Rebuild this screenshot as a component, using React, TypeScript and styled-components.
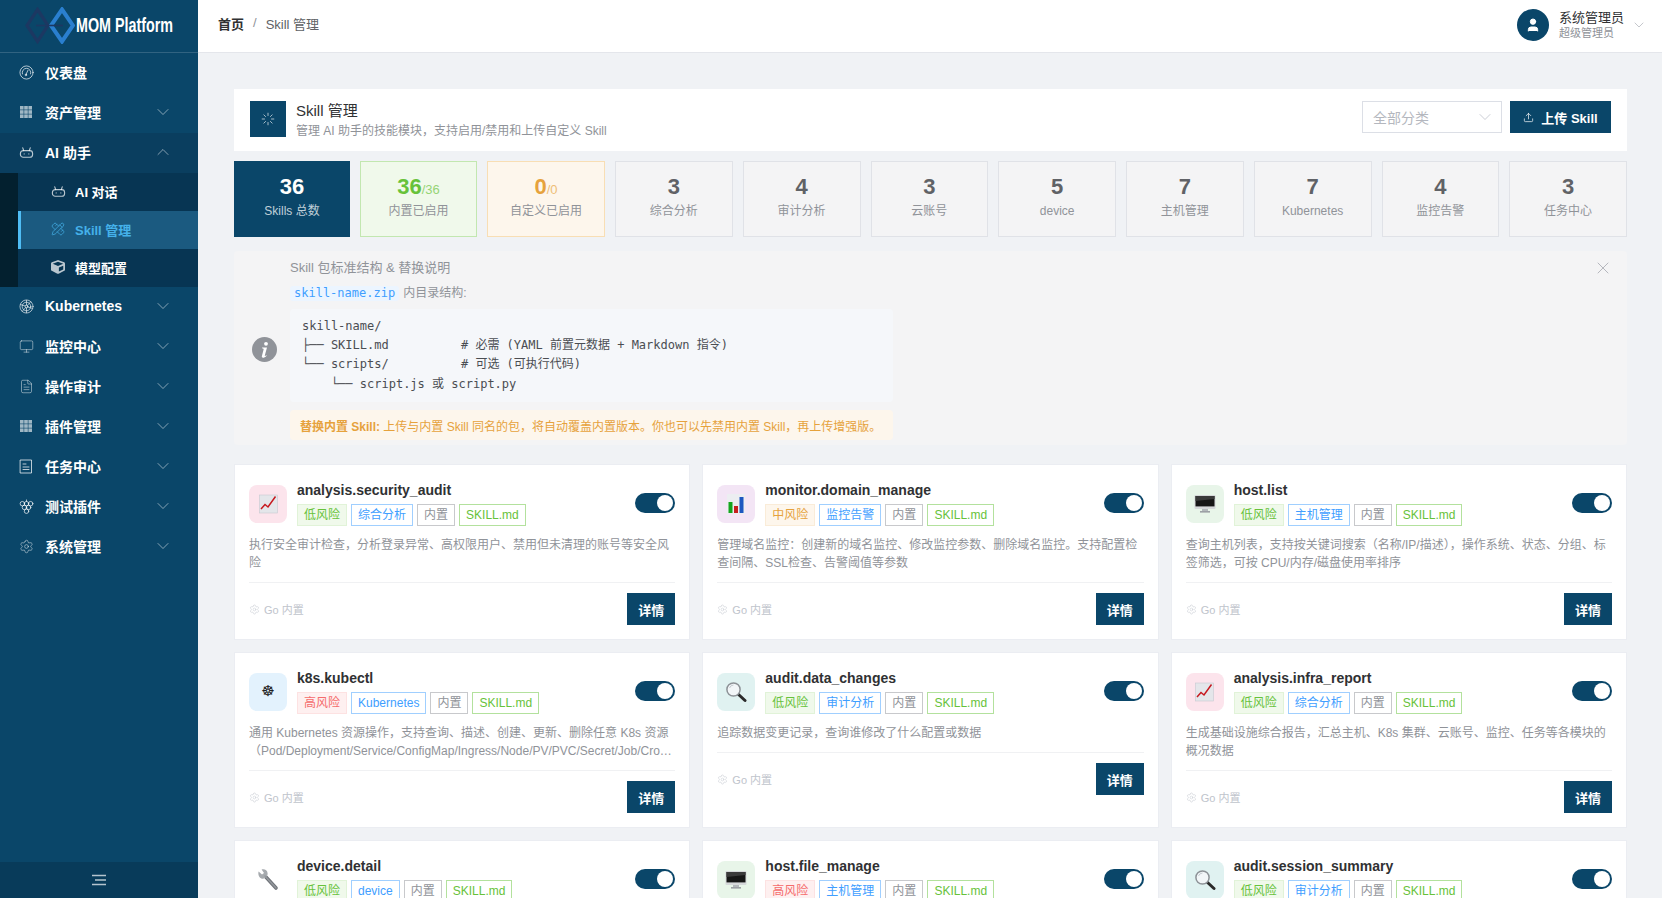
import React from "react";
import styled, { createGlobalStyle } from "styled-components";
import { ChevronDown, ChevronUp, Monitor, FileText, Settings, PencilRuler, X, Upload, Loader, User } from "lucide-react";
import { FaCube } from "react-icons/fa";

const NAVY = "#0a4669";
const SANS = `"Liberation Sans", "Noto Sans CJK SC", sans-serif`;
const MONO = `"DejaVu Sans Mono", "Noto Sans CJK SC", monospace`;
const COMMA = "\uFF0C";
const COLON = "\uFF1A";
const LP = "\uFF08";
const RP = "\uFF09";

const Global = createGlobalStyle`
  html, body { margin: 0; padding: 0; height: 100%; overflow: hidden; }
  body { font-family: ${SANS}; background: #f0f2f5; color: #303133; }
  * { box-sizing: border-box; }
`;

const Shell = styled.div`display: flex; height: 100vh; overflow: hidden;`;
const Sidebar = styled.aside`width: 198px; flex: none; background: ${NAVY}; display: flex; flex-direction: column; color: #fff;`;
const LogoBar = styled.div`height: 53px; flex: none; border-bottom: 1px solid rgba(255,255,255,.16); display: flex; align-items: center; padding: 0 0 2px 25px;`;
const LogoSvg = styled.svg`flex: none;`;
const LogoText = styled.span`display: inline-block; width: 97px; flex: none; margin-left: 1px; font-size: 20px; font-weight: 700; color: #fff; white-space: nowrap; transform: scaleX(.715); transform-origin: left center;`;
const NavItem = styled.div<{ $open?: boolean }>`height: 40px; display: flex; align-items: center; padding: 0 0 2px 18px; font-size: 14px; font-weight: 700; background: ${p => (p.$open ? "#0a3e5f" : "transparent")}; color: #fff;`;
const NavIcon = styled.span`width: 16px; height: 16px; margin-right: 11px; display: flex; align-items: center; justify-content: center; color: rgba(255,255,255,.72); flex: none;`;
const NavLabel = styled.span`flex: 1;`;
const NavArrow = styled.span`width: 20px; margin-right: 25px; display: flex; color: rgba(255,255,255,.55);`;
const SubNav = styled.div`border-left: 18px solid #03202f; background: #073553;`;
const SubItem = styled.div<{ $active?: boolean }>`height: 38px; display: flex; align-items: center; font-size: 13px; font-weight: 700; padding-bottom: 2px; padding-left: ${p => (p.$active ? "29px" : "32px")}; border-left: ${p => (p.$active ? "3px solid #4fbdf5" : "0")}; background: ${p => (p.$active ? "#1b5a80" : "transparent")}; color: ${p => (p.$active ? "#45b1ea" : "#fff")};`;
const SubIcon = styled.span<{ $active?: boolean }>`width: 16px; height: 16px; margin-right: 9px; display: flex; align-items: center; justify-content: center; color: ${p => (p.$active ? "#45b1ea" : "rgba(255,255,255,.72)")};`;
const Collapse = styled.div`margin-top: auto; height: 36px; flex: none; background: #083b5a; display: flex; align-items: center; justify-content: center; color: rgba(255,255,255,.7);`;

const Right = styled.div`flex: 1; min-width: 0; display: flex; flex-direction: column;`;
const TopBar = styled.header`height: 53px; flex: none; background: #fff; border-bottom: 1px solid #e4e6eb; display: flex; align-items: center; padding: 0 15px 2px 20px;`;
const Crumbs = styled.div`flex: 1; font-size: 13px; color: #606266; display: flex; gap: 9px; padding-bottom: 3px;`;
const CrumbHome = styled.span`font-weight: 700; color: #303133;`;
const CrumbSep = styled.span`color: #909399; padding-top: 1px;`;
const Avatar = styled.div`width: 32px; height: 32px; border-radius: 50%; background: ${NAVY}; color: #fff; display: flex; align-items: center; justify-content: center; margin-right: 10px;`;
const UserBox = styled.div`display: flex; flex-direction: column; margin-right: 7px;`;
const UserName = styled.span`font-size: 13px; line-height: 16px; color: #303133;`;
const UserRole = styled.span`font-size: 11px; line-height: 14px; color: #909399;`;
const UserArrow = styled.span`display: flex; color: #a8abb2;`;

const Main = styled.main`flex: 1; overflow: hidden; padding: 36px 35px 0 36px;`;
const PageHead = styled.section`height: 62px; background: #fff; display: flex; align-items: flex-start; padding: 12px 16px 0;`;
const PageIcon = styled.div`width: 36px; height: 36px; background: ${NAVY}; color: #fff; display: flex; align-items: center; justify-content: center; margin-right: 10px;`;
const PageText = styled.div`flex: 1;`;
const PageTitle = styled.div`font-size: 15px; line-height: 20px; color: #303133;`;
const PageSub = styled.div`font-size: 12px; line-height: 16px; margin-top: 2px; color: #909399;`;
const SelectBox = styled.div`width: 140px; height: 32px; border: 1px solid #dcdfe6; display: flex; align-items: center; justify-content: space-between; padding: 0 6px 1px 10px; font-size: 14px; color: #b4b7be; margin-right: 8px;`;
const UploadBtn = styled.button`width: 101px; height: 32px; border: 0; background: ${NAVY}; color: #fff; font: 700 13px ${SANS}; display: flex; align-items: center; justify-content: center; gap: 7px; padding: 0;`;

const Stats = styled.section`display: grid; grid-template-columns: 116px 117px 118px repeat(8, minmax(0, 1fr)); gap: 10px; margin-top: 10px;`;
const tones: Record<string, { bg: string; bd: string; num: string; sub: string; label: string }> = {
  navy: { bg: NAVY, bd: NAVY, num: "#fff", sub: "#fff", label: "rgba(255,255,255,.75)" },
  green: { bg: "#f0f9eb", bd: "#c2e7b0", num: "#67c23a", sub: "#95d475", label: "#909399" },
  orange: { bg: "#fdf6ec", bd: "#f8deb4", num: "#e6a23c", sub: "#eebe77", label: "#909399" },
  plain: { bg: "#f4f4f5", bd: "#e0e2e7", num: "#606266", sub: "#909399", label: "#909399" },
};
const Tile = styled.div<{ $tone: string }>`height: 76px; border: 1px solid ${p => tones[p.$tone].bd}; background: ${p => tones[p.$tone].bg}; display: flex; flex-direction: column; align-items: center; padding-top: 12px;`;
const TileNum = styled.div<{ $tone: string }>`font-size: 22px; line-height: 26px; height: 26px; font-weight: 700; color: ${p => tones[p.$tone].num};`;
const TileSub = styled.span<{ $tone: string }>`font-size: 13px; line-height: 1; font-weight: 400; color: ${p => tones[p.$tone].sub};`;
const TileLabel = styled.div<{ $tone: string }>`font-size: 12px; line-height: 16px; margin-top: 3px; color: ${p => tones[p.$tone].label};`;

const Alert = styled.section`position: relative; margin-top: 14px; background: #f4f4f5; border-radius: 4px; padding: 8px 16px 5px 18px; display: flex; align-items: center; gap: 13px;`;
const AlertIcon = styled.span`display: flex; flex: none;`;
const AlertBody = styled.div`width: 603px;`;
const AlertTitle = styled.div`font-size: 13px; line-height: 18px; color: #909399;`;
const AlertClose = styled.span`position: absolute; right: 14px; top: 7px; display: flex; color: #a8abb2;`;
const ZipRow = styled.div`font-size: 12px; line-height: 18px; height: 18px; margin-top: 7px; color: #909399;`;
const ZipChip = styled.code`font: 12px/15px ${MONO}; background: #ecf5ff; color: #409eff; padding: 0 4px; border-radius: 3px; display: inline-block; margin-right: 4px;`;
const CodeBlock = styled.pre`margin: 7px 0 0; background: #f5f7fa; border-radius: 4px; padding: 8px 12px; font: 12px/19.2px ${MONO}; color: #4a4d52; height: 93px; overflow: hidden;`;
const WarnBox = styled.div`margin-top: 8px; height: 30px; background: #fdf6ec; border-radius: 4px; padding: 0 10px; display: flex; align-items: center; font-size: 12px; color: #e6a23c; white-space: nowrap;`;

const Cards = styled.section`display: grid; grid-template-columns: repeat(3, minmax(0, 1fr)); gap: 14px; margin: 20px 1px 0 1px;`;
const Card = styled.article`background: #fff; box-shadow: 0 0 0 1px #ebedf2; padding: 16px 14px 14px;`;
const CardHead = styled.div`display: flex; align-items: center;`;
const EmojiBox = styled.div<{ $bg: string }>`width: 38px; height: 38px; flex: none; border-radius: 8px; background: ${p => p.$bg}; display: flex; align-items: center; justify-content: center; margin-right: 10px;`;
const WheelGlyph = styled.span`font: 15px/1 "DejaVu Sans", sans-serif; color: #222;`;
const CardInfo = styled.div`flex: 1; min-width: 0;`;
const CardName = styled.div`font-size: 14px; line-height: 18px; font-weight: 700; color: #303133;`;
const TagRow = styled.div`display: flex; gap: 4px; margin-top: 5px;`;
const tagTones: Record<string, [string, string, string]> = {
  low: ["#f0f9eb", "#e1f3d8", "#67c23a"],
  mid: ["#fdf6ec", "#faecd8", "#e6a23c"],
  high: ["#fef0f0", "#fde2e2", "#f56c6c"],
  blue: ["#fff", "#a0cfff", "#409eff"],
  grey: ["#fff", "#c8c9cc", "#909399"],
  green: ["#fff", "#b3e19d", "#67c23a"],
};
const Tag = styled.span<{ $tone: string }>`height: 22px; line-height: 20px; padding: 0 6px; font-size: 12px; white-space: nowrap; background: ${p => tagTones[p.$tone][0]}; border: 1px solid ${p => tagTones[p.$tone][1]}; color: ${p => tagTones[p.$tone][2]};`;
const Switch = styled.span`width: 40px; height: 20px; flex: none; margin-bottom: 2px; border-radius: 10px; background: ${NAVY}; display: flex; justify-content: flex-end; padding: 2px;`;
const Knob = styled.span`width: 16px; height: 16px; border-radius: 50%; background: #fff;`;
const Desc = styled.p`margin: 10px 0 0; font-size: 12px; line-height: 18px; color: #909399; display: -webkit-box; -webkit-box-orient: vertical; -webkit-line-clamp: 2; overflow: hidden;`;
const CardFoot = styled.div`margin-top: 10px; border-top: 1px solid #f0f1f3; padding-top: 10px; display: flex; align-items: center; justify-content: space-between;`;
const Origin = styled.span`display: flex; align-items: center; gap: 4px; font-size: 11px; color: #c0c4cc;`;
const DetailBtn = styled.button`width: 48px; height: 32px; border: 0; padding: 0; background: ${NAVY}; color: #fff; font: 700 13px ${SANS};`;

const line = { fill: "none", stroke: "currentColor", strokeWidth: 1, strokeLinecap: "round" as const, strokeLinejoin: "round" as const };

const Odometer = () => (
  <svg width="15" height="15" viewBox="0 0 16 16"><g {...line}><circle cx="8" cy="8" r="7" /><path d="M3.6 9.5a4.6 4.6 0 1 1 8.8 0" /><path d="M7.4 10.2 9.6 5.6" /><circle cx="7.3" cy="10.6" r=".8" /></g></svg>
);
const Grid3 = () => (
  <svg width="12" height="12" viewBox="0 0 12 12" fill="currentColor" opacity=".85">
    {[0, 4.2, 8.4].flatMap(y => [0, 4.2, 8.4].map(x => <rect key={`${x}-${y}`} x={x} y={y} width="3.6" height="3.6" />))}
  </svg>
);
const Bot = () => (
  <svg width="15" height="15" viewBox="0 0 16 16"><g {...line} strokeWidth={1.2}><rect x="1.5" y="6" width="13" height="7" rx="3" /><path d="M5 6 4 3M11 6l1-3" /><path d="M5.5 9.5h.01M10.5 9.5h.01" /></g></svg>
);
const KubeIcon = () => (
  <svg width="15" height="15" viewBox="0 0 16 16"><g {...line} strokeWidth={.9}><circle cx="8" cy="8" r="7" /><circle cx="8" cy="8" r="4.6" /><circle cx="8" cy="8" r="1.5" /><path d="M8 1.5v5M8 9.5v5M1.8 6l4.8 1.4M9.4 8.6l4.8 1.4M3.6 13l3.4-3.8M9 6.8 12.4 3" /></g></svg>
);
const TaskIcon = () => (
  <svg width="14" height="15" viewBox="0 0 14 15"><g {...line}><rect x="1.5" y="1" width="11" height="13" /><path d="M4 5h3M4 8h6M4 10.5h6" /></g></svg>
);
const GrapeIcon = () => (
  <svg width="15" height="15" viewBox="0 0 16 16"><g {...line}><circle cx="3.6" cy="5" r="2.4" /><circle cx="8" cy="5" r="2.4" /><circle cx="12.4" cy="5" r="2.4" /><circle cx="5.8" cy="9" r="2.4" /><circle cx="10.2" cy="9" r="2.4" /><circle cx="8" cy="13" r="2.4" /><path d="M8 2.6V1" /></g></svg>
);
const FoldIcon = () => (
  <svg width="14" height="12" viewBox="0 0 14 12"><g stroke="currentColor" strokeWidth="1.4"><path d="M0 1.5h14M3 6h11M0 10.5h14" /></g></svg>
);
const LogoMark = () => (
  <LogoSvg width="50" height="37" viewBox="0 0 50 37" fill="none">
    <path d="M12.5 2.5 23 18.5 12.5 34.5 2 18.5Z" stroke="#1c3862" strokeWidth="3.2" />
    <path d="M37 2.5 48 18.5 37 34.5 26 18.5Z" stroke="#2a7fcf" strokeWidth="4" />
    <path d="M11 18.5H38" stroke="#1c3862" strokeWidth="1.6" />
  </LogoSvg>
);
const InfoDot = () => (
  <svg width="25" height="25" viewBox="0 0 25 25">
    <circle cx="12.5" cy="12.5" r="12.5" fill="#909399" />
    <circle cx="14" cy="6.8" r="1.9" fill="#fff" />
    <path d="M10 10.4h5l-2.2 8.2c-.1.5.4.6 1.6-.3l.3.5c-1.6 1.6-2.6 2-3.6 2s-1.5-.7-1.2-1.7l1.7-6.7c.2-.8-.2-1-1.300-1z" fill="#fff" />
  </svg>
);

const ChartEmoji = () => (
  <svg width="21" height="22" viewBox="0 0 21 22">
    <rect x="1.5" y="2" width="18" height="18" fill="#e4e6ea" stroke="#c6c9d0" strokeWidth=".6" />
    <path d="M3 16 7 11.5 10 14 17.5 3.5" fill="none" stroke="#c7191f" strokeWidth="1.5" />
  </svg>
);
const BarsEmoji = () => (
  <svg width="20" height="22" viewBox="0 0 20 22">
    <rect x="1" y="1" width="18" height="20" fill="#eceef1" />
    <rect x="2.5" y="9" width="4" height="11" fill="#14a51e" />
    <rect x="8" y="13" width="4" height="7" fill="#c8201f" />
    <rect x="13.5" y="4" width="4" height="16" fill="#1c57c0" />
  </svg>
);
const MonitorEmoji = () => (
  <svg width="22" height="20" viewBox="0 0 22 20">
    <rect x="8" y="14" width="6" height="3.4" fill="#b4b8bc" />
    <rect x="6" y="17" width="10" height="1.6" fill="#9ca0a5" />
    <rect x="0.5" y="1" width="21" height="14" rx="1" fill="#d6d8da" />
    <rect x="1.5" y="2" width="19" height="10.4" fill="#161616" />
    <path d="M1.5 2h19v3L1.5 7z" fill="#3a3a3a" />
  </svg>
);
const LensEmoji = () => (
  <svg width="22" height="22" viewBox="0 0 22 22">
    <path d="M13 13 20 19.5" stroke="#2a2a2a" strokeWidth="3" strokeLinecap="round" />
    <circle cx="8.5" cy="8.5" r="6.6" fill="#f2f6f8" stroke="#8d9297" strokeWidth="1.5" />
    <path d="M4.5 7a4.5 4.5 0 0 1 4-3" fill="none" stroke="#c5cbd0" strokeWidth="1" />
  </svg>
);
const WrenchEmoji = () => (
  <svg width="24" height="24" viewBox="0 0 24 24">
    <path d="M9 8 20 20" stroke="#6f7378" strokeWidth="3.6" strokeLinecap="round" />
    <path d="M2.6 3.6 6 6.6 8 5 5.6 1.6c2.8-.9 5.800.7 6 3.700.1 1.200-.3 2.300-1 3.200L9 10c-.9.6-2 .9-3.100.7C3.300 10.300 1.700 6.500 2.600 3.600Z" fill="#a6aaae" />
    <path d="M9 8 20 20" stroke="#94989d" strokeWidth="1.4" strokeLinecap="round" />
  </svg>
);

const emojiOf: Record<string, React.ReactNode> = {
  chart: <ChartEmoji />, bars: <BarsEmoji />, monitor: <MonitorEmoji />, lens: <LensEmoji />, wrench: <WrenchEmoji />, wheel: <WheelGlyph>☸</WheelGlyph>,
};
const emojiBg: Record<string, string> = {
  chart: "#fce4ec", bars: "#f3e5f5", monitor: "#e8f5e9", lens: "#e0f2f1", wrench: "#ffffff", wheel: "#e3f2fd",
};

const topNav: [string, React.ReactNode][] = [
  ["Kubernetes", <KubeIcon />],
  ["监控中心", <Monitor size={15} strokeWidth={1} />],
  ["操作审计", <FileText size={15} strokeWidth={1} />],
  ["插件管理", <Grid3 />],
  ["任务中心", <TaskIcon />],
  ["测试插件", <GrapeIcon />],
  ["系统管理", <Settings size={15} strokeWidth={1} />],
];

const statsData: [string, string][] = [
  ["3", "综合分析"], ["4", "审计分析"], ["3", "云账号"], ["5", "device"], ["7", "主机管理"], ["7", "Kubernetes"], ["4", "监控告警"], ["3", "任务中心"],
];

type Skill = { name: string; emoji: string; risk: "low" | "mid" | "high"; cat: string; desc: string };
const riskText = { low: "低风险", mid: "中风险", high: "高风险" };
const skills: Skill[] = [
  { name: "analysis.security_audit", emoji: "chart", risk: "low", cat: "综合分析", desc: `执行安全审计检查${COMMA}分析登录异常、高权限用户、禁用但未清理的账号等安全风险` },
  { name: "monitor.domain_manage", emoji: "bars", risk: "mid", cat: "监控告警", desc: `管理域名监控${COLON}创建新的域名监控、修改监控参数、删除域名监控。支持配置检查间隔、SSL检查、告警阈值等参数` },
  { name: "host.list", emoji: "monitor", risk: "low", cat: "主机管理", desc: `查询主机列表${COMMA}支持按关键词搜索${LP}名称/IP/描述${RP}${COMMA}操作系统、状态、分组、标签筛选${COMMA}可按 CPU/内存/磁盘使用率排序` },
  { name: "k8s.kubectl", emoji: "wheel", risk: "high", cat: "Kubernetes", desc: `通用 Kubernetes 资源操作${COMMA}支持查询、描述、创建、更新、删除任意 K8s 资源${LP}Pod/Deployment/Service/ConfigMap/Ingress/Node/PV/PVC/Secret/Job/CronJob/StatefulSet 等${RP}` },
  { name: "audit.data_changes", emoji: "lens", risk: "low", cat: "审计分析", desc: `追踪数据变更记录${COMMA}查询谁修改了什么配置或数据` },
  { name: "analysis.infra_report", emoji: "chart", risk: "low", cat: "综合分析", desc: `生成基础设施综合报告${COMMA}汇总主机、K8s 集群、云账号、监控、任务等各模块的概况数据` },
  { name: "device.detail", emoji: "wrench", risk: "low", cat: "device", desc: "查询设备详情" },
  { name: "host.file_manage", emoji: "monitor", risk: "high", cat: "主机管理", desc: "管理主机文件" },
  { name: "audit.session_summary", emoji: "lens", risk: "low", cat: "审计分析", desc: "汇总会话记录" },
];

const CODE = `skill-name/
├── SKILL.md          # 必需 (YAML 前置元数据 + Markdown 指令)
└── scripts/          # 可选 (可执行代码)
    └── script.js 或 script.py`;

const PAGE_SUB = `管理 AI 助手的技能模块${COMMA}支持启用/禁用和上传自定义 Skill`;
const WARN = `上传与内置 Skill 同名的包${COMMA}将自动覆盖内置版本。你也可以先禁用内置 Skill${COMMA}再上传增强版。`;

const Down = () => <ChevronDown size={20} strokeWidth={1.1} />;

export default function App() {
  return (
    <Shell>
      <Global />
      <Sidebar>
        <LogoBar><LogoMark /><LogoText>MOM Platform</LogoText></LogoBar>
        <NavItem><NavIcon><Odometer /></NavIcon><NavLabel>仪表盘</NavLabel></NavItem>
        <NavItem><NavIcon><Grid3 /></NavIcon><NavLabel>资产管理</NavLabel><NavArrow><Down /></NavArrow></NavItem>
        <NavItem $open><NavIcon><Bot /></NavIcon><NavLabel>AI 助手</NavLabel><NavArrow><ChevronUp size={20} strokeWidth={1.1} /></NavArrow></NavItem>
        <SubNav>
          <SubItem><SubIcon><Bot /></SubIcon>AI 对话</SubItem>
          <SubItem $active><SubIcon $active><PencilRuler size={14} strokeWidth={1.2} /></SubIcon>Skill 管理</SubItem>
          <SubItem><SubIcon><FaCube size={14} /></SubIcon>模型配置</SubItem>
        </SubNav>
        {topNav.map(([label, icon]) => (
          <NavItem key={label}><NavIcon>{icon}</NavIcon><NavLabel>{label}</NavLabel><NavArrow><Down /></NavArrow></NavItem>
        ))}
        <Collapse><FoldIcon /></Collapse>
      </Sidebar>
      <Right>
        <TopBar>
          <Crumbs><CrumbHome>首页</CrumbHome><CrumbSep>/</CrumbSep><span>Skill 管理</span></Crumbs>
          <Avatar><User size={16} fill="#fff" strokeWidth={1.5} /></Avatar>
          <UserBox><UserName>系统管理员</UserName><UserRole>超级管理员</UserRole></UserBox>
          <UserArrow><ChevronDown size={16} strokeWidth={1} /></UserArrow>
        </TopBar>
        <Main>
          <PageHead>
            <PageIcon><Loader size={14} strokeWidth={1.1} /></PageIcon>
            <PageText><PageTitle>Skill 管理</PageTitle><PageSub>{PAGE_SUB}</PageSub></PageText>
            <SelectBox>全部分类<ChevronDown size={20} strokeWidth={1} color="#c0c4cc" /></SelectBox>
            <UploadBtn><Upload size={11} strokeWidth={1.5} />上传 Skill</UploadBtn>
          </PageHead>
          <Stats>
            <Tile $tone="navy"><TileNum $tone="navy">36</TileNum><TileLabel $tone="navy">Skills 总数</TileLabel></Tile>
            <Tile $tone="green"><TileNum $tone="green">36<TileSub $tone="green">/36</TileSub></TileNum><TileLabel $tone="green">内置已启用</TileLabel></Tile>
            <Tile $tone="orange"><TileNum $tone="orange">0<TileSub $tone="orange">/0</TileSub></TileNum><TileLabel $tone="orange">自定义已启用</TileLabel></Tile>
            {statsData.map(([n, l]) => (
              <Tile $tone="plain" key={l}><TileNum $tone="plain">{n}</TileNum><TileLabel $tone="plain">{l}</TileLabel></Tile>
            ))}
          </Stats>
          <Alert>
            <AlertIcon><InfoDot /></AlertIcon>
            <AlertBody>
              <AlertTitle>Skill 包标准结构 &amp; 替换说明</AlertTitle>
              <ZipRow><ZipChip>skill-name.zip</ZipChip>内目录结构:</ZipRow>
              <CodeBlock>{CODE}</CodeBlock>
              <WarnBox><strong>替换内置 Skill:</strong>&nbsp;{WARN}</WarnBox>
            </AlertBody>
            <AlertClose><X size={20} strokeWidth={1} /></AlertClose>
          </Alert>
          <Cards>
            {skills.map(s => (
              <Card key={s.name}>
                <CardHead>
                  <EmojiBox $bg={emojiBg[s.emoji]}>{emojiOf[s.emoji]}</EmojiBox>
                  <CardInfo>
                    <CardName>{s.name}</CardName>
                    <TagRow>
                      <Tag $tone={s.risk}>{riskText[s.risk]}</Tag>
                      <Tag $tone="blue">{s.cat}</Tag>
                      <Tag $tone="grey">内置</Tag>
                      <Tag $tone="green">SKILL.md</Tag>
                    </TagRow>
                  </CardInfo>
                  <Switch><Knob /></Switch>
                </CardHead>
                <Desc>{s.desc}</Desc>
                <CardFoot>
                  <Origin><Settings size={11} strokeWidth={1} />Go 内置</Origin>
                  <DetailBtn>详情</DetailBtn>
                </CardFoot>
              </Card>
            ))}
          </Cards>
        </Main>
      </Right>
    </Shell>
  );
}
